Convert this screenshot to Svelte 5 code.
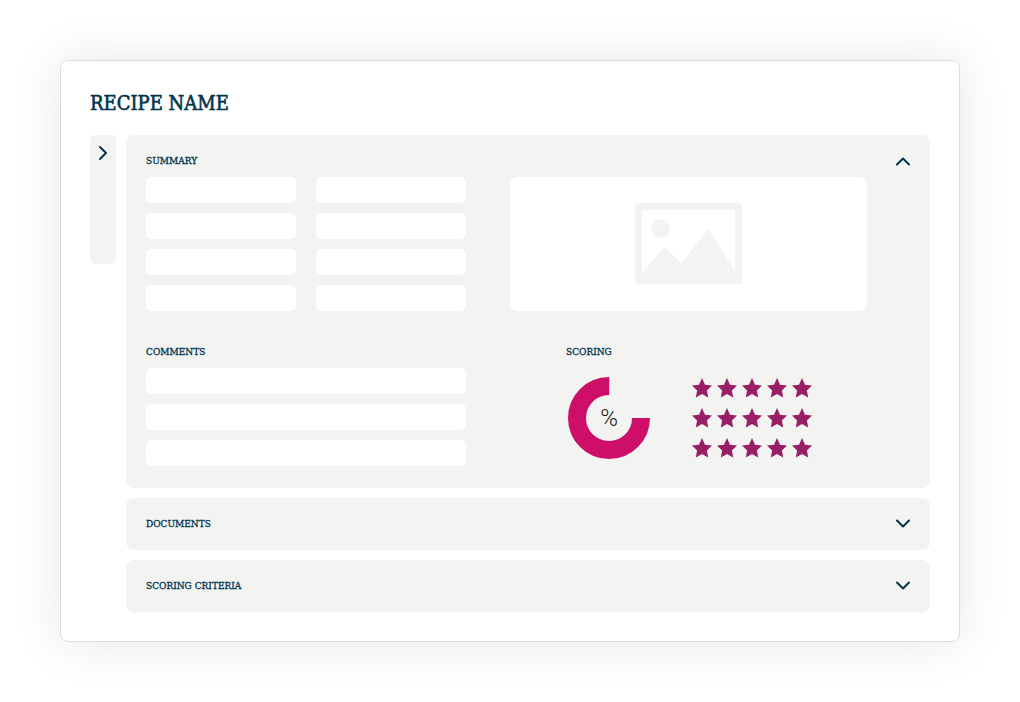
<script lang="ts">
  let menuOpen = $state(false);
  let open = $state({ summary: true, documents: false, criteria: false });

  const score = 75;
  const circumference = 2 * Math.PI * 32;
  const ratings = [5, 5, 5];
</script>

{#snippet chevron()}
  <svg class="chevron" viewBox="0 0 14 10" aria-hidden="true">
    <path d="M1 1.500 7 7.500 13 1.500" />
  </svg>
{/snippet}

{#snippet header(key: "summary" | "documents" | "criteria", title: string)}
  <h2>
    <button
      class="panel-header"
      id={key}
      aria-expanded={open[key]}
      onclick={() => (open[key] = !open[key])}
    >
      {title}
      {@render chevron()}
    </button>
  </h2>
{/snippet}

<main class="card">
  <h1>RECIPE NAME</h1>

  <div class="layout">
    <nav class="sidebar">
      <button
        class="sidebar-toggle"
        aria-labelledby="summary"
        aria-expanded={menuOpen}
        onclick={() => (menuOpen = !menuOpen)}
      >
        <svg viewBox="0 0 10 16" aria-hidden="true">
          <path d="M2 2 8 8 2 14" />
        </svg>
      </button>
    </nav>

    <div class="panels">
      <section class="panel" class:open={open.summary}>
        {@render header("summary", "SUMMARY")}

        {#if open.summary}
          <div class="columns">
            <div class="fields">
              {#each Array(8) as _}
                <input type="text" aria-labelledby="summary" />
              {/each}
            </div>

            <div class="picture">
              <svg viewBox="0 0 107 81" aria-hidden="true">
                <path
                  fill-rule="evenodd"
                  d="M3 0H104Q107 0 107 3V78Q107 81 104 81H3Q0 81 0 78V3Q0 0 3 0ZM7 7V70.500L27.500 45.800Q29 44 31 45.500L46.500 61L71.300 28Q73 26 74.700 28L100 67.500V7Z"
                />
                <circle cx="25.500" cy="25.500" r="9.500" />
              </svg>
            </div>

            <div class="comments">
              <h3 id="comments">COMMENTS</h3>
              <div class="lines">
                {#each Array(3) as _}
                  <input type="text" aria-labelledby="comments" />
                {/each}
              </div>
            </div>

            <div class="scoring">
              <h3>SCORING</h3>
              <div class="scores">
                <div class="donut">
                  <svg viewBox="0 0 82 82" aria-hidden="true">
                    <circle
                      cx="41"
                      cy="41"
                      r="32"
                      stroke-dasharray="{(circumference * score) / 100} {circumference}"
                    />
                  </svg>
                  <span>%</span>
                </div>

                <div class="ratings">
                  {#each ratings as rating}
                    <div class="stars">
                      {#each Array(rating) as _}
                        <svg viewBox="0 0 20 20" aria-hidden="true">
                          <path
                            d="M10 0 13 6.700 20 7.500 14.900 12.400 16.200 19.500 10 16 3.800 19.500 5.100 12.400 0 7.500 7 6.700Z"
                          />
                        </svg>
                      {/each}
                    </div>
                  {/each}
                </div>
              </div>
            </div>
          </div>
        {/if}
      </section>

      <section class="panel">
        {@render header("documents", "DOCUMENTS")}
      </section>

      <section class="panel">
        {@render header("criteria", "SCORING CRITERIA")}
      </section>
    </div>
  </div>
</main>

<style>
  :global(body) {
    margin: 0;
    background: #fff;
  }

  .card {
    margin: 60px;
    padding: 29px;
    border: 1px solid #dedede;
    border-radius: 8px;
    background: #fff;
    box-shadow: 0 0 50px rgba(0, 0, 0, 0.1);
    color: #00344d;
    font-family: "DejaVu Serif Condensed", "DejaVu Serif", serif;
  }

  h1,
  h2,
  h3 {
    margin: 0;
    font-weight: 400;
  }

  h1 {
    margin-bottom: 19px;
    font-size: 20px;
    line-height: 26px;
    -webkit-text-stroke: 0.6px currentColor;
  }

  h3,
  .panel-header {
    font-size: 10px;
    line-height: 16px;
    -webkit-text-stroke: 0.3px currentColor;
  }

  button {
    border: 0;
    background: none;
    color: inherit;
    font: inherit;
    cursor: pointer;
  }

  input {
    display: block;
    box-sizing: border-box;
    width: 100%;
    height: 26px;
    padding: 0 8px;
    border: 0;
    border-radius: 5px;
    background: #fff;
    color: inherit;
    font: inherit;
    font-size: 12px;
  }

  .layout {
    display: flex;
    align-items: flex-start;
    gap: 10px;
  }

  .sidebar {
    flex: none;
    width: 26px;
    min-height: 129px;
    border-radius: 5px;
    background: #f3f3f1;
  }

  .sidebar-toggle {
    display: flex;
    justify-content: center;
    width: 100%;
    padding: 10px 0;
  }

  .sidebar-toggle svg {
    width: 10px;
    height: 16px;
  }

  .sidebar-toggle path,
  .chevron path {
    fill: none;
    stroke: #00344d;
    stroke-width: 2;
    stroke-linecap: round;
    stroke-linejoin: round;
  }

  .panels {
    display: flex;
    flex: 1;
    flex-direction: column;
    gap: 10px;
    min-width: 0;
  }

  .panel {
    padding: 0 20px 10px;
    border-radius: 8px;
    background: #f3f3f1;
  }

  .panel.open {
    padding-bottom: 22px;
  }

  .panel-header {
    display: flex;
    align-items: center;
    justify-content: space-between;
    width: 100%;
    padding: 18px 0 8px;
    font-size: 10px;
    line-height: 16px;
  }

  .chevron {
    width: 14px;
    height: 10px;
  }

  .open .chevron {
    transform: rotate(180deg);
  }

  .columns {
    display: grid;
    grid-template-columns: minmax(0, 320fr) minmax(0, 357fr);
    gap: 33px 44px;
    padding-right: 43px;
  }

  .fields {
    display: grid;
    grid-template-columns: 1fr 1fr;
    gap: 10px 20px;
  }

  .picture {
    display: flex;
    align-items: flex-start;
    justify-content: center;
    padding-top: 26px;
    border-radius: 8px;
    background: #fff;
  }

  .picture svg {
    width: 107px;
    height: 81px;
    fill: #f3f3f1;
  }

  .lines {
    display: flex;
    flex-direction: column;
    gap: 10px;
    margin-top: 8px;
  }

  .scoring {
    padding-left: 56px;
  }

  .scores {
    display: flex;
    gap: 42px;
    padding: 17px 0 0 2px;
  }

  .donut {
    display: grid;
    place-items: center;
    width: 82px;
    height: 82px;
  }

  .donut svg,
  .donut span {
    grid-area: 1 / 1;
  }

  .donut svg {
    width: 82px;
    height: 82px;
  }

  .donut circle {
    fill: none;
    stroke: #ce0f69;
    stroke-width: 18;
  }

  .donut span {
    color: #1d1d1b;
    font-family: Roboto, sans-serif;
    font-size: 24px;
    font-weight: 300;
    line-height: 24px;
  }

  .ratings {
    display: flex;
    flex-direction: column;
    gap: 10px;
    padding-top: 1px;
  }

  .stars {
    display: flex;
    gap: 5px;
  }

  .stars svg {
    width: 20px;
    height: 20px;
    fill: #981e66;
  }
</style>
